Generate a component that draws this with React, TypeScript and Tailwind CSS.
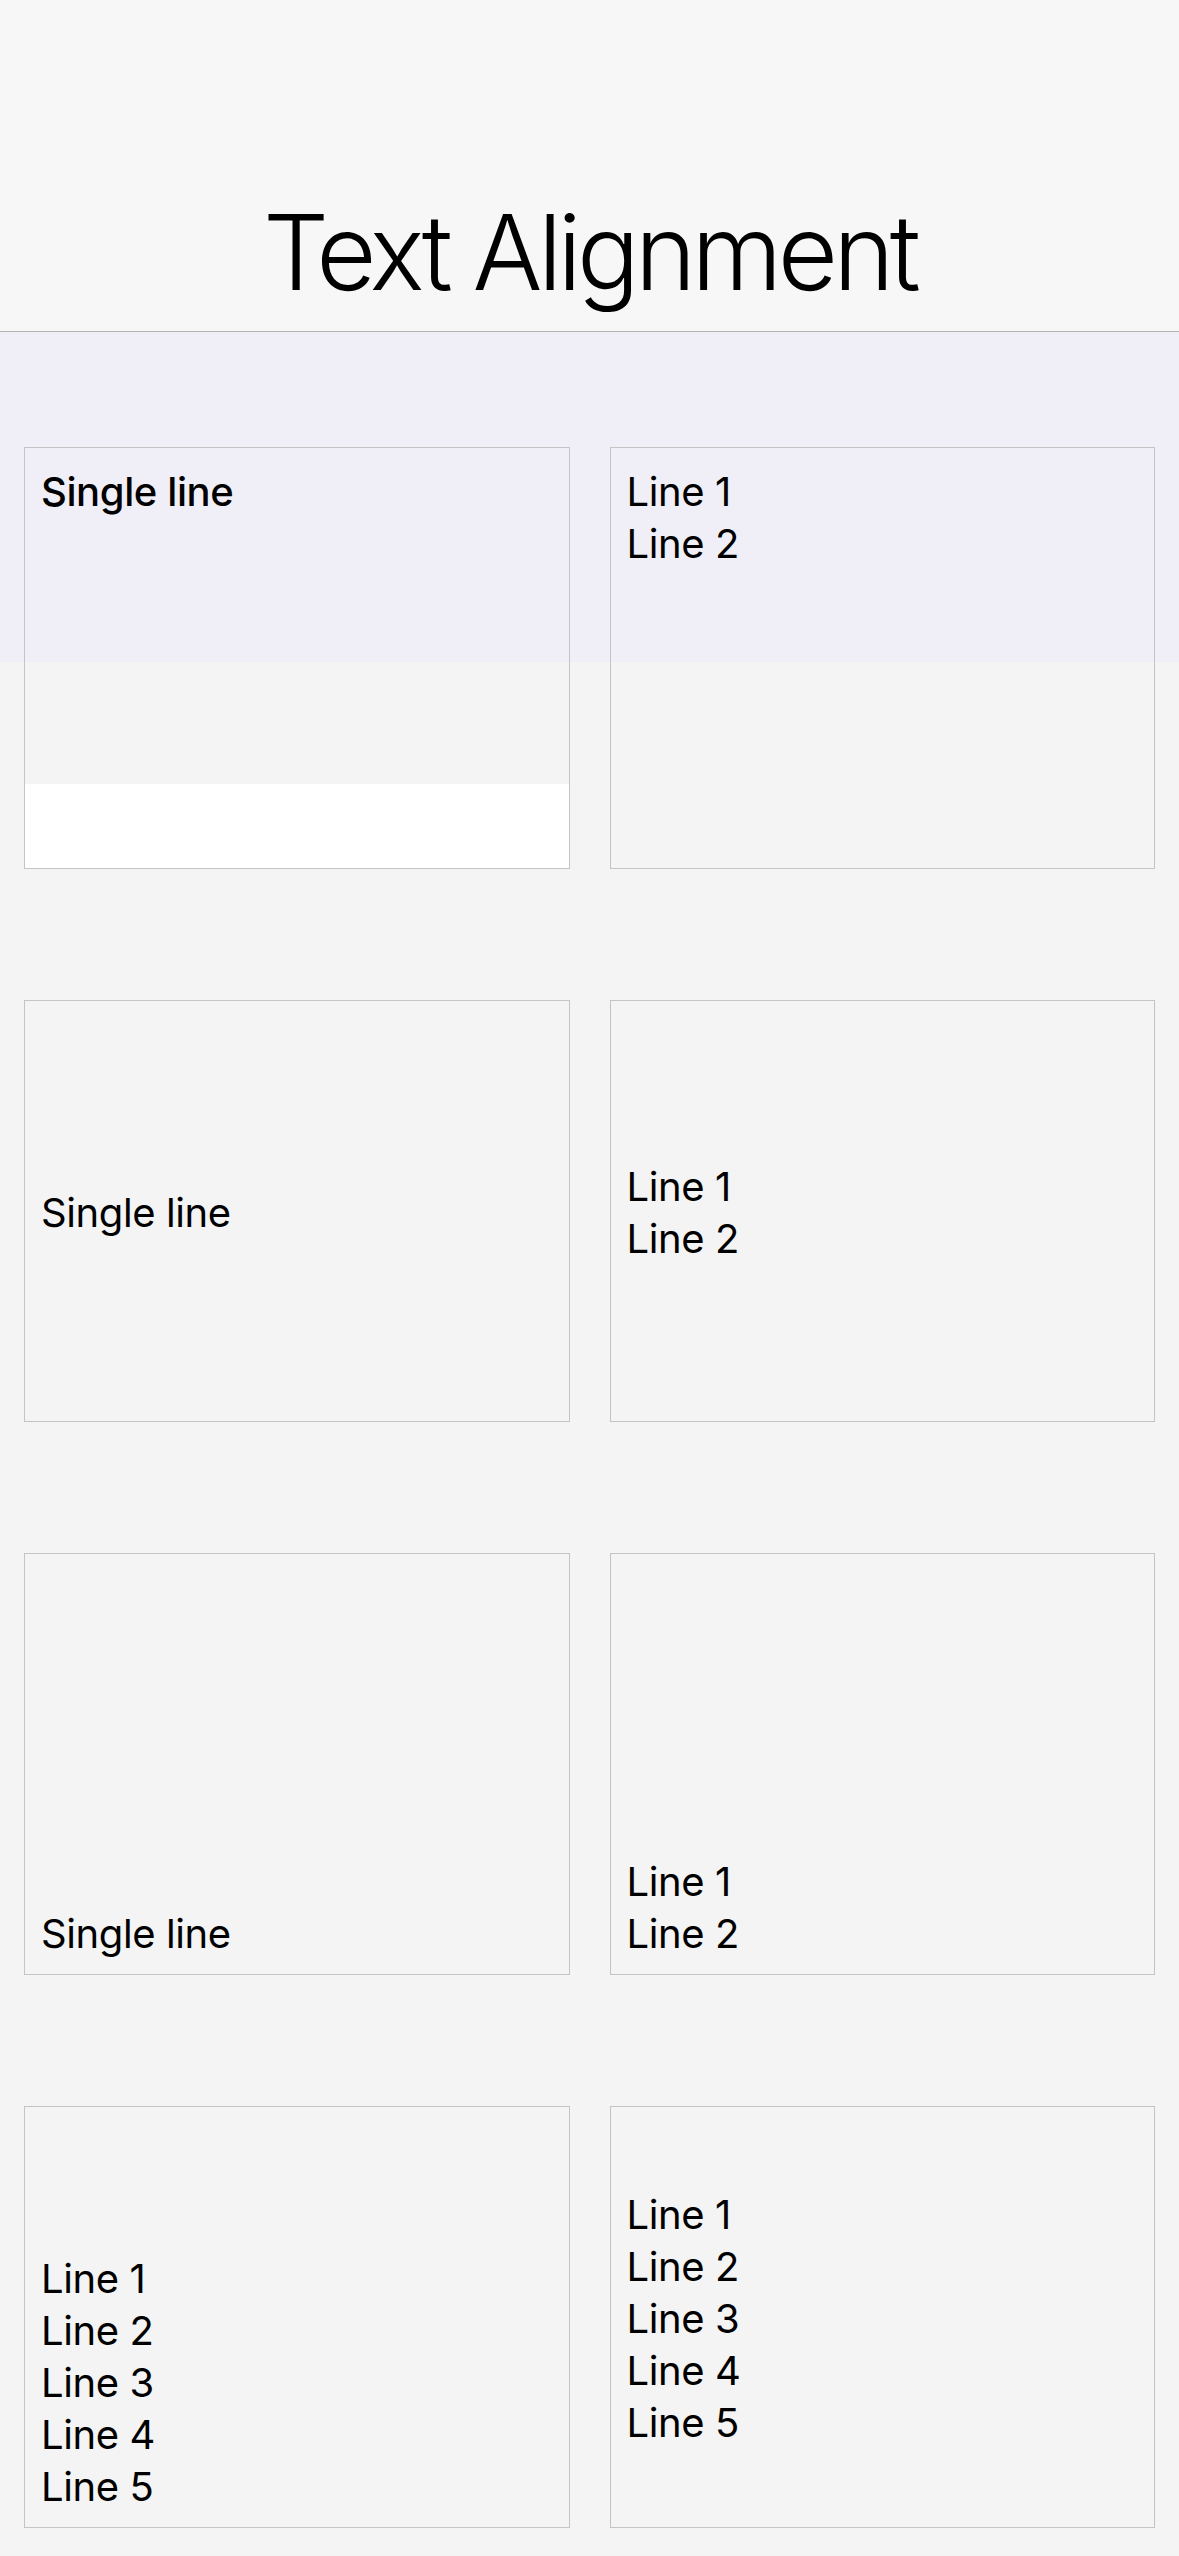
import type { ReactNode } from 'react';

type Align = 'start' | 'center' | 'end';

// one bordered box, text pinned top / middle / bottom
const Cell = ({ align, lines, className = '' }: { align: Align; lines: ReactNode[]; className?: string }) => {
  const justify = align === 'start' ? 'justify-start' : align === 'center' ? 'justify-center' : 'justify-end';
  return (
    <div className={`h-[422px] border border-[#c4c4c4] pl-4 pr-4 pt-[18px] pb-[14px] flex flex-col ${justify} ${className}`}>
      {lines.map((line, i) => (
        <div key={i} className="text-[40px] leading-[52px] tracking-[-0.01em] text-black">
          {line}
        </div>
      ))}
    </div>
  );
};

const two = ['Line 1', 'Line 2'];
const five = ['Line 1', 'Line 2', 'Line 3', 'Line 4', 'Line 5'];

export default function App() {
  return (
    <div className="min-h-[2556px] w-full bg-[#f4f4f4] font-['Inter','Noto_Sans',sans-serif]">
      {/* Header */}
      <header className="h-[332px] bg-[#f7f7f7] border-b border-[#b4b4b4] pt-[200px] flex justify-center">
        <h1 className="text-[104px] leading-none font-light tracking-[-0.045em] text-black">Text Alignment</h1>
      </header>

      {/* Grid of alignment samples */}
      <main className="bg-[linear-gradient(to_bottom,#f0eff7_330px,#f4f4f4_330px)] px-6 pt-[115px] pb-[27px] grid grid-cols-2 gap-x-10 gap-y-[131px]">
        <Cell
          align="start"
          lines={['Single line']}
          className="font-medium bg-[linear-gradient(to_bottom,transparent_336px,#ffffff_336px)]"
        />
        <Cell align="start" lines={two} />

        <Cell align="center" lines={['Single line']} />
        <Cell align="center" lines={two} />

        <Cell align="end" lines={['Single line']} />
        <Cell align="end" lines={two} />

        <Cell align="end" lines={five} />
        <Cell align="center" lines={five} />
      </main>
    </div>
  );
}
